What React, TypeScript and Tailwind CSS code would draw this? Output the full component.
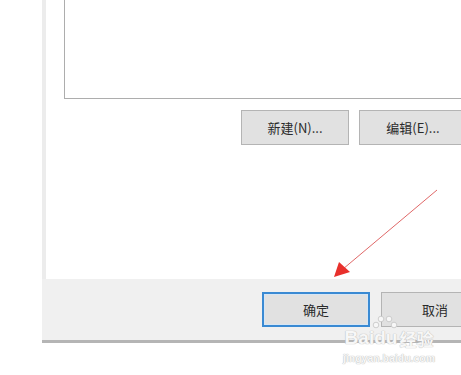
import React from "react";

const font = { fontFamily: '"Noto Sans CJK SC", "Noto Sans", sans-serif' };
const outline = "0 0 1px #bdbdbd, 0 0 1px #bdbdbd";

function Btn({ label, primary }: { label: string; primary?: boolean }) {
  return (
    <div
      className={
        "flex h-[35px] w-[108px] shrink-0 items-center justify-center bg-[#e1e1e1] text-[13px] text-[#2a2a2a] " +
        (primary ? "border-2 border-[#3a8ad3] shadow-[inset_0_0_0_1px_#d6e6f5]" : "border border-[#b4b4b4]")
      }
      style={font}
    >
      {label}
    </div>
  );
}

export default function App() {
  return (
    <div className="relative h-[375px] w-[461px] overflow-hidden bg-white" style={font}>
      <div className="ml-[42px] flex h-[343px] flex-col">
        <div className="flex h-[279px] flex-col border-l-4 border-[#ececec] bg-white">
          <div className="ml-[18px] h-[99px] w-[500px] border-b border-l border-[#adadad] bg-white" />
          <div className="ml-[195px] mt-[11px] flex gap-[10px]">
            <Btn label="新建(N)..." />
            <Btn label="编辑(E)..." />
          </div>
        </div>
        <div className="flex h-[61px] gap-[11px] bg-[#f0f0f0] pl-[220px] pt-[13px]">
          <Btn label="确定" primary />
          <Btn label="取消" />
        </div>
        <div className="h-[3px] bg-[#b5b5b5]" />
      </div>

      <svg className="absolute left-0 top-0" width="461" height="375" viewBox="0 0 461 375">
        <line x1="437" y1="190" x2="343" y2="269" stroke="#e06868" strokeWidth="1" />
        <polygon points="334,277 339,262 350,272" fill="#e8302c" />
      </svg>

      <div className="absolute left-[344px] top-[320px] flex w-[90px] flex-col items-center leading-none text-[#f7f7f7]">
        <div className="relative flex h-[27px] items-end">
          <span className="text-[19px] font-bold leading-none" style={{ fontFamily: '"Liberation Sans", sans-serif', textShadow: outline }}>
            Bai
          </span>
          <span className="relative text-[19px] font-bold leading-none" style={{ fontFamily: '"Liberation Sans", sans-serif', textShadow: outline }}>
            du
            <svg className="absolute -top-[13px] left-[-3px]" width="28" height="16" viewBox="0 0 28 16">
              <circle cx="5" cy="10" r="2.8" fill="#f7f7f7" stroke="#c4c4c4" strokeWidth="0.8" />
              <circle cx="10" cy="4" r="2.8" fill="#f7f7f7" stroke="#c4c4c4" strokeWidth="0.8" />
              <circle cx="18" cy="4" r="2.8" fill="#f7f7f7" stroke="#c4c4c4" strokeWidth="0.8" />
              <circle cx="23" cy="10" r="2.8" fill="#f7f7f7" stroke="#c4c4c4" strokeWidth="0.8" />
            </svg>
          </span>
          <span className="ml-[2px] text-[17px] font-bold leading-none" style={{ ...font, textShadow: outline }}>
            经验
          </span>
        </div>
        <div className="mt-[6px] text-[10.5px] font-bold" style={{ fontFamily: '"Liberation Sans", sans-serif', textShadow: outline }}>
          jingyan.baidu.com
        </div>
      </div>
    </div>
  );
}
